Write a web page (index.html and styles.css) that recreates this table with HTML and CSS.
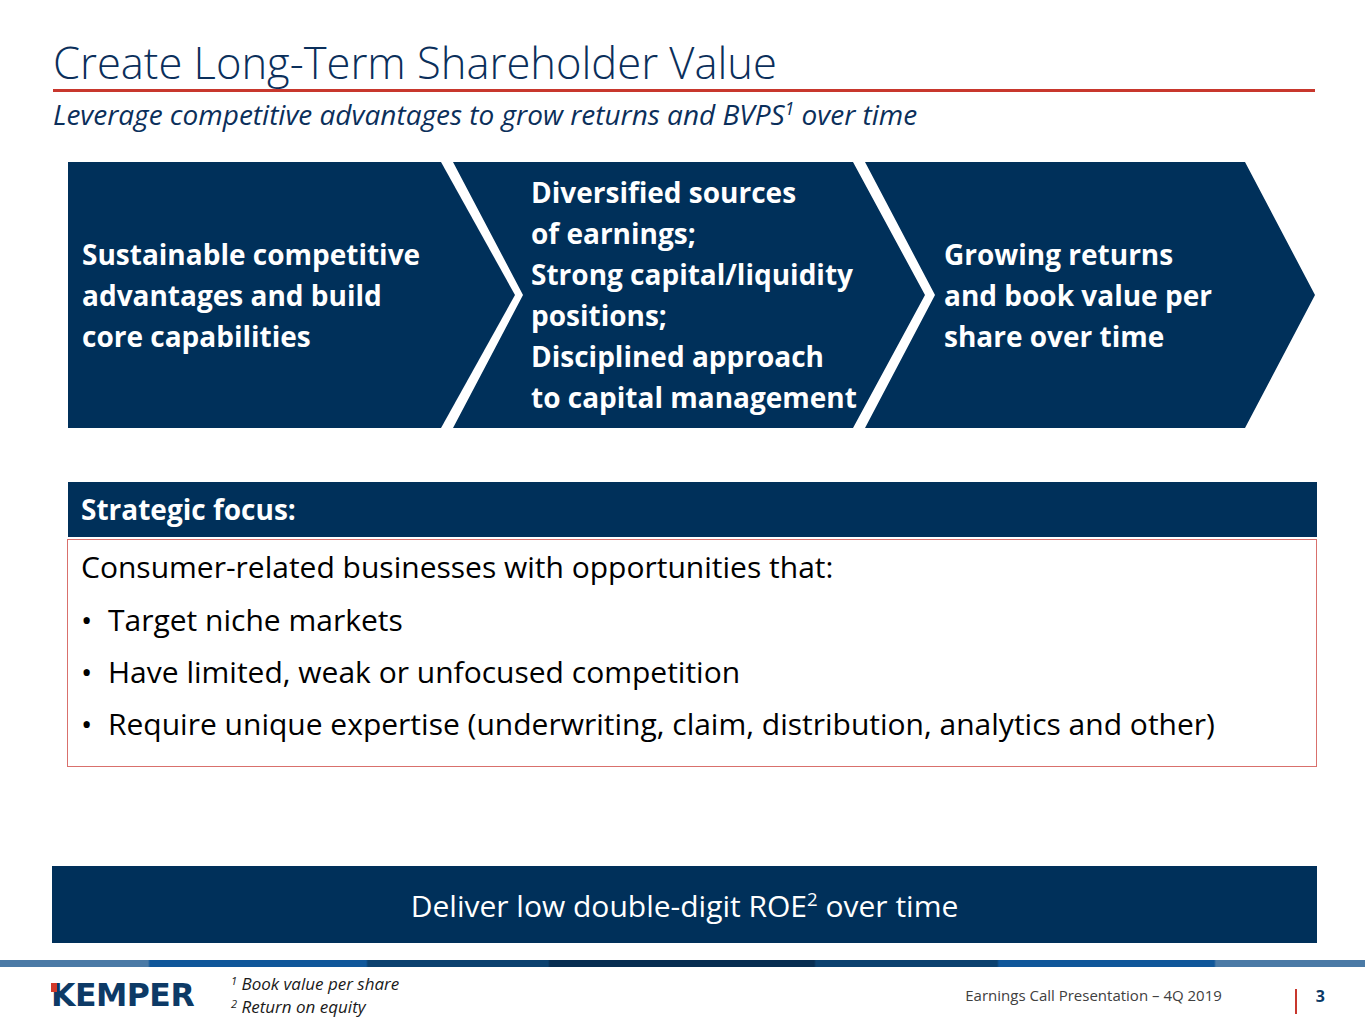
FILE: index.html
```html
<!DOCTYPE html>
<html lang="en">
<head>
<meta charset="utf-8">
<title>Create Long-Term Shareholder Value</title>
<link rel="stylesheet" href="styles.css">
</head>
<body>
<div class="slide">
  <header class="head">
    <h1 class="title">Create Long-Term Shareholder Value</h1>
    <div class="rule"></div>
    <p class="subtitle">Leverage competitive advantages to grow returns and BVPS<sup>1</sup> over time</p>
  </header>

  <section class="flow">
    <div class="chev chev-first">
      <p>Sustainable competitive<br>advantages and build<br>core capabilities</p>
    </div>
    <div class="chev chev-mid">
      <p>Diversified sources<br>of earnings;<br>Strong capital/liquidity<br>positions;<br>Disciplined approach<br>to capital management</p>
    </div>
    <div class="chev chev-last">
      <p>Growing returns<br>and book value per<br>share over time</p>
    </div>
  </section>

  <section class="focus">
    <div class="focus-head">Strategic focus:</div>
    <div class="focus-body">
      <p class="lead">Consumer-related businesses with opportunities that:</p>
      <ul class="bullets">
        <li>Target niche markets</li>
        <li>Have limited, weak or unfocused competition</li>
        <li>Require unique expertise (underwriting, claim, distribution, analytics and other)</li>
      </ul>
    </div>
  </section>

  <section class="goal">Deliver low double-digit ROE<sup>2</sup> over time</section>

  <div class="stripe"></div>

  <footer class="foot">
    <div class="logo"><span class="logo-k">K</span>EMPER</div>
    <div class="notes">
      <div><sup>1</sup> Book value per share</div>
      <div><sup>2</sup> Return on equity</div>
    </div>
    <div class="deck">Earnings Call Presentation – 4Q 2019</div>
    <div class="divider"></div>
    <div class="page">3</div>
  </footer>
</div>
</body>
</html>
```

FILE: styles.css
```css
* { box-sizing: border-box; }

html, body {
  margin: 0;
  padding: 0;
  background: #ffffff;
}

body {
  font-family: "Open Sans", "Lato", sans-serif;
  color: #000000;
}

.slide {
  width: 1365px;
  height: 1024px;
  overflow: hidden;
  position: relative;
}

/* Header */
.head {
  padding: 37px 50px 0 53px;
}

.title {
  margin: 0;
  font-size: 43.5px;
  font-weight: 300;
  line-height: 52px;
  color: #0b2f5b;
}

.rule {
  height: 3px;
  background: #c8372d;
}

.subtitle {
  margin: 7px 0 0 0;
  font-size: 28px;
  font-style: italic;
  line-height: 31px;
  color: #0b2f5b;
}

.subtitle sup, .goal sup {
  font-size: 62%;
  line-height: 0;
  vertical-align: 0.6em;
}

/* Chevron flow */
.flow {
  display: flex;
  height: 266px;
  margin: 32px 0 0 68px;
}

.chev {
  height: 266px;
  background: #00305a;
  color: #ffffff;
  display: flex;
  align-items: center;
  font-weight: 700;
  font-size: 28px;
  line-height: 41px;
}

.chev p { margin: 0; }

.chev-first {
  width: 447px;
  padding-left: 14px;
  clip-path: polygon(0 0, 373px 0, 447px 133px, 373px 266px, 0 266px);
}

.chev-mid {
  width: 472px;
  margin-left: -62px;
  padding-left: 78px;
  clip-path: polygon(0 0, 400px 0, 472px 133px, 400px 266px, 0 266px, 70px 133px);
}

.chev-last {
  width: 450px;
  margin-left: -60px;
  padding-left: 79px;
  clip-path: polygon(0 0, 380px 0, 450px 133px, 380px 266px, 0 266px, 70px 133px);
}

/* Strategic focus */
.focus {
  margin: 54px 48px 0 67px;
}

.focus-head {
  margin-left: 1px;
  height: 55px;
  background: #00305a;
  color: #ffffff;
  font-weight: 700;
  font-size: 28px;
  line-height: 55px;
  padding-left: 13px;
}

.focus-body {
  margin-top: 2px;
  height: 228px;
  border: 1px solid #d9706c;
  padding: 1px 0 0 13px;
  font-size: 30px;
  line-height: 52px;
  color: #000000;
}

.lead { margin: 0; }

.bullets {
  list-style: none;
  margin: 1px 0 0 0;
  padding: 0;
}

.bullets li {
  position: relative;
  padding-left: 27px;
}

.bullets li::before {
  content: "•";
  position: absolute;
  left: 0;
  top: 0;
}

/* Goal bar */
.goal {
  margin: 99px 48px 0 52px;
  height: 77px;
  background: #00305a;
  color: #ffffff;
  font-size: 30px;
  line-height: 79px;
  text-align: center;
}

/* Footer stripe */
.stripe {
  margin-top: 17px;
  height: 7px;
  background: linear-gradient(90deg,
    #4b7aa6 0, #4b7aa6 148px,
    #10579a 150px, #10579a 366px,
    #0c416f 368px, #0c416f 548px,
    #072d51 550px, #072d51 814px,
    #0c416f 816px, #0c416f 997px,
    #10579a 999px, #10579a 1214px,
    #4b7aa6 1216px, #4b7aa6 100%);
}

.foot {
  display: flex;
  align-items: flex-start;
  padding: 5px 40px 0 51px;
}

.logo {
  margin-top: 9px;
  font-family: "DejaVu Sans", sans-serif;
  font-weight: 700;
  font-size: 31.5px;
  line-height: 28px;
  letter-spacing: -0.5px;
  color: #0d3a66;
  width: 180px;
}

.logo-k {
  position: relative;
  display: inline-block;
}

.logo-k::before {
  content: "";
  position: absolute;
  left: 0;
  top: 2px;
  width: 6px;
  height: 9px;
  background: #d23a2a;
}

.notes {
  font-style: italic;
  font-size: 17px;
  line-height: 23px;
  color: #1a1a1a;
}

.notes sup {
  font-size: 11px;
  line-height: 0;
  vertical-align: 0.5em;
}

.deck {
  margin: 13px 0 0 auto;
  font-size: 15px;
  color: #404040;
}

.divider {
  margin: 17px 0 0 73px;
  width: 2px;
  height: 25px;
  background: #c8372d;
}

.page {
  margin: 13px 0 0 19px;
  font-weight: 700;
  font-size: 16px;
  color: #0d3a66;
}
```
